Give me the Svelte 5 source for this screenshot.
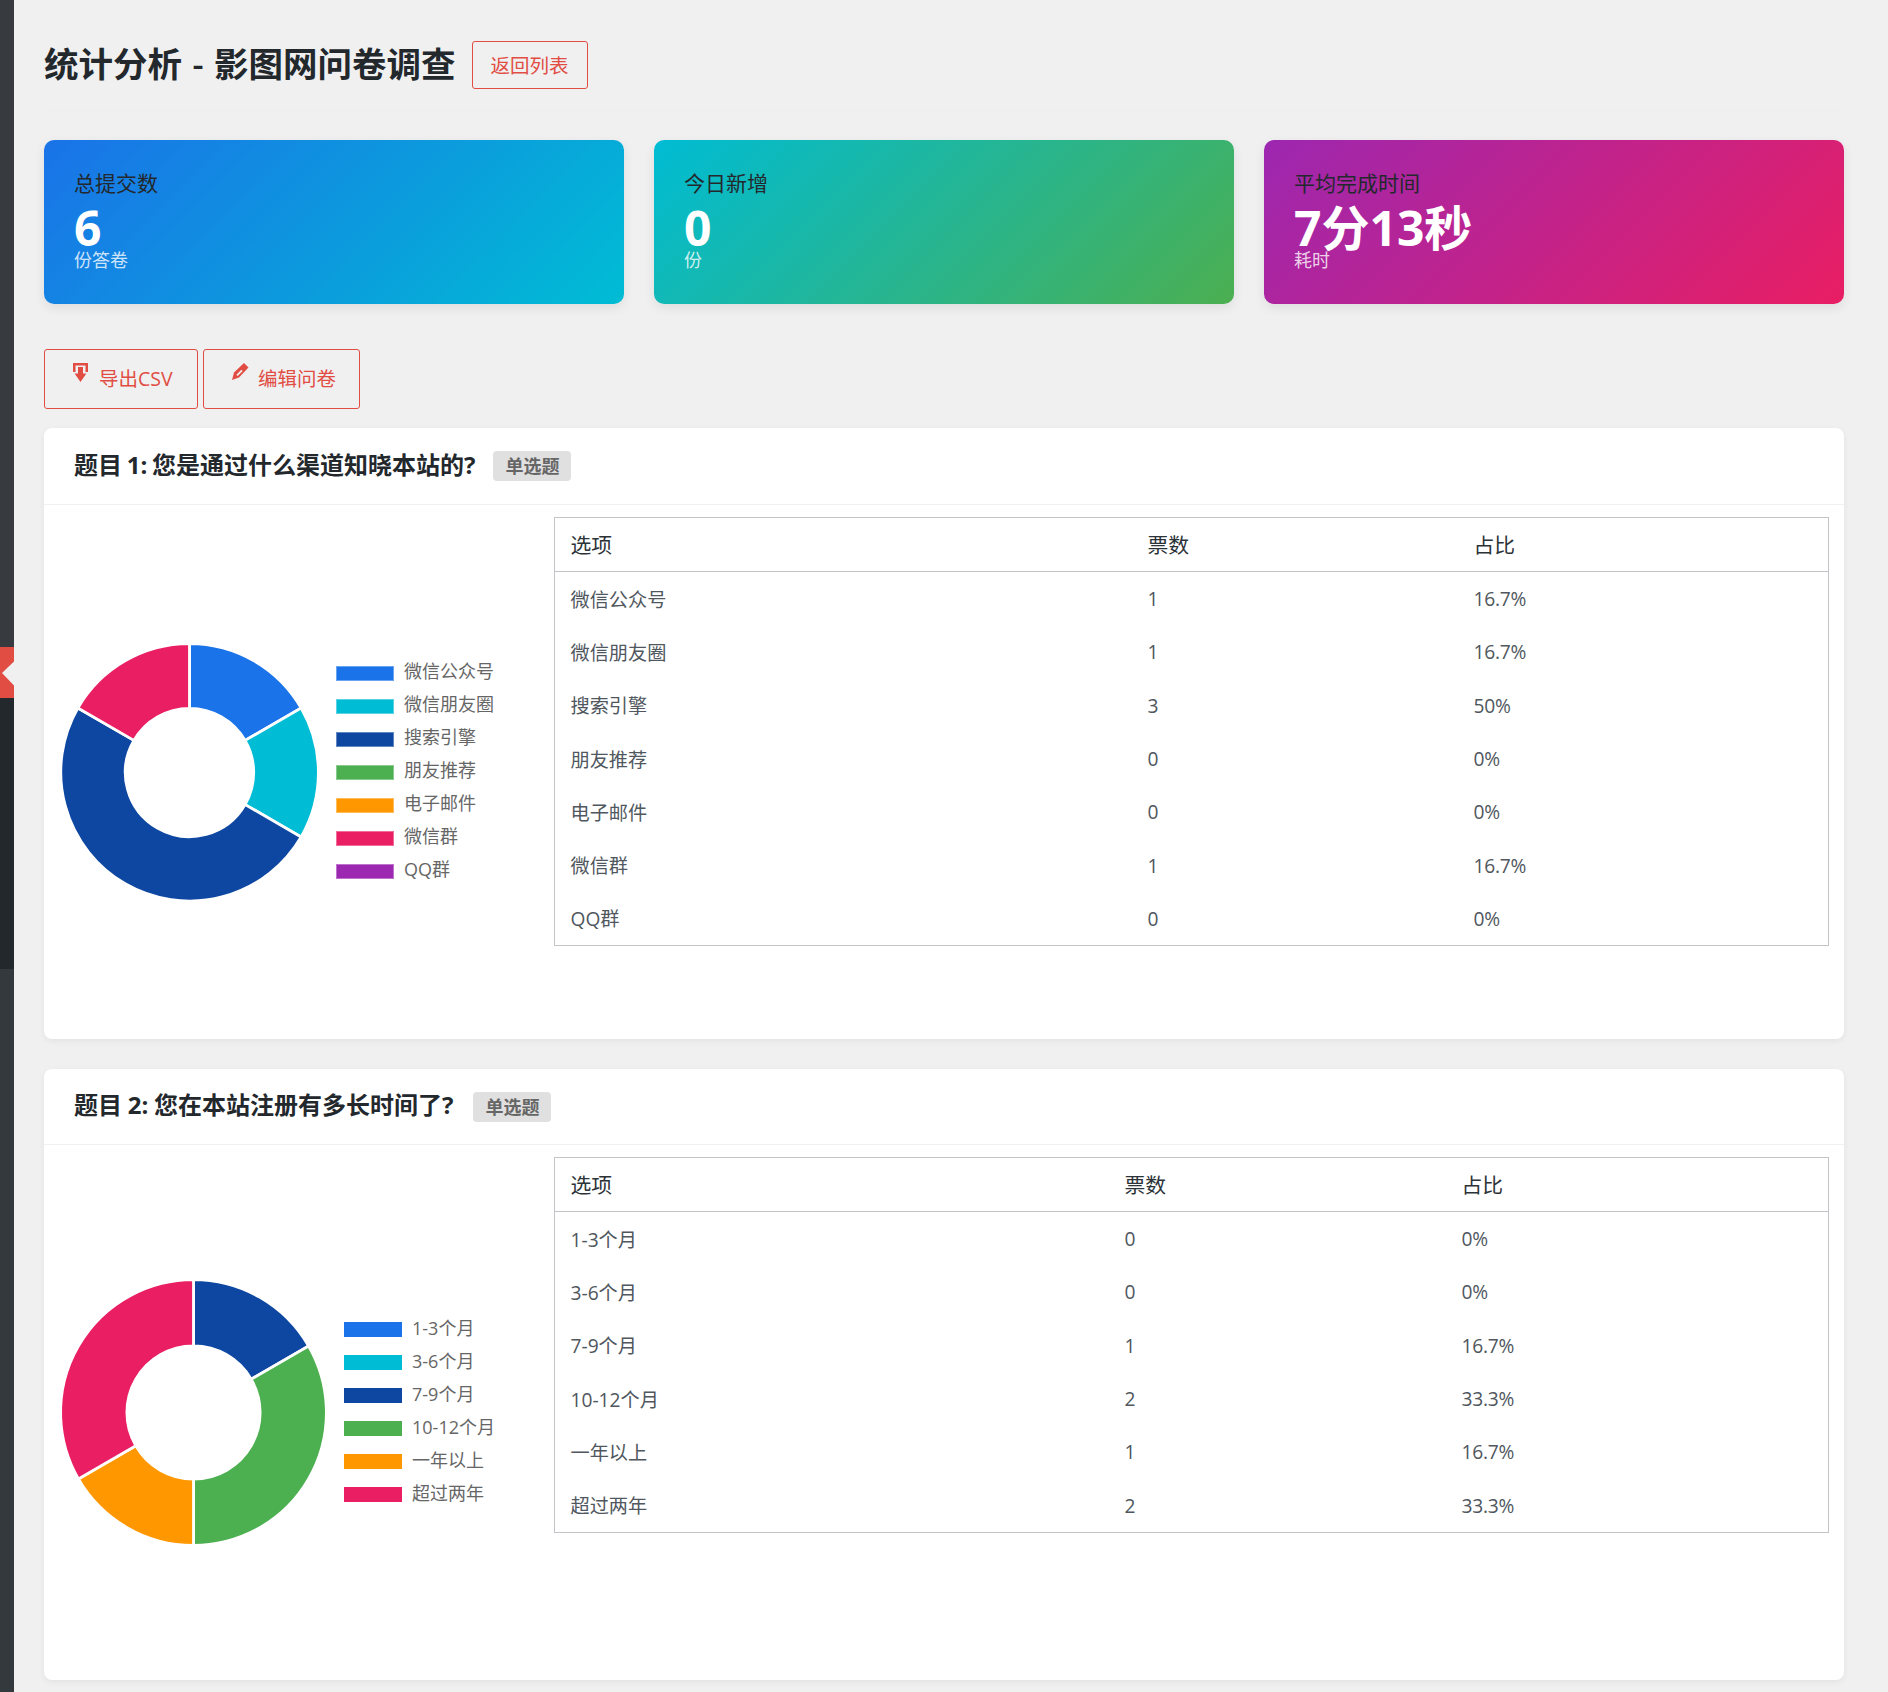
<script>
  const colors = { blue: '#1a73e8', cyan: '#00bcd4', navy: '#0d47a1', green: '#4caf50', orange: '#ff9800', pink: '#e91e63', purple: '#9c27b0' };

  const stats = [
    { cls: 's1', label: '总提交数', value: '6', sub: '份答卷' },
    { cls: 's2', label: '今日新增', value: '0', sub: '份' },
    { cls: 's3', label: '平均完成时间', value: '7分13秒', sub: '耗时' }
  ];

  const questions = [
    {
      cls: 'q1', title: '题目 1: 您是通过什么渠道知晓本站的?', d: 255, r: 64.2,
      rows: [
        ['微信公众号', 1, '16.7%', colors.blue],
        ['微信朋友圈', 1, '16.7%', colors.cyan],
        ['搜索引擎', 3, '50%', colors.navy],
        ['朋友推荐', 0, '0%', colors.green],
        ['电子邮件', 0, '0%', colors.orange],
        ['微信群', 1, '16.7%', colors.pink],
        ['QQ群', 0, '0%', colors.purple]
      ]
    },
    {
      cls: 'q2', title: '题目 2: 您在本站注册有多长时间了?', d: 263, r: 66.6,
      rows: [
        ['1-3个月', 0, '0%', colors.blue],
        ['3-6个月', 0, '0%', colors.cyan],
        ['7-9个月', 1, '16.7%', colors.navy],
        ['10-12个月', 2, '33.3%', colors.green],
        ['一年以上', 1, '16.7%', colors.orange],
        ['超过两年', 2, '33.3%', colors.pink]
      ]
    }
  ];

  function slices(q) {
    const total = q.rows.reduce((a, r) => a + r[1], 0);
    const R = q.d / 2 + 1.4, r = q.r;
    let a = -Math.PI / 2;
    const out = [];
    for (const row of q.rows) {
      if (!row[1]) continue;
      const b = a + (row[1] / total) * Math.PI * 2;
      const large = b - a > Math.PI ? 1 : 0;
      const p = (rad, t) => `${(rad * Math.cos(t)).toFixed(2)} ${(rad * Math.sin(t)).toFixed(2)}`;
      out.push({
        color: row[3],
        d: `M${p(R, a)}A${R} ${R} 0 ${large} 1 ${p(R, b)}L${p(r, b)}A${r} ${r} 0 ${large} 0 ${p(r, a)}Z`
      });
      a = b;
    }
    return out;
  }
</script>

<div class="page">
  <aside class="rail">
    <div class="rail-top"></div>
    <div class="rail-tab">
      <svg width="14" height="51" viewBox="0 0 14 51" aria-hidden="true"><path d="M14 14.5 2 26 14 38.5Z" fill="#f0f0f1" /></svg>
    </div>
    <div class="rail-dark"></div>
    <div class="rail-bottom"></div>
  </aside>

  <main class="wrap">
    <header class="head">
      <h1>统计分析 - 影图网问卷调查</h1>
      <a class="btn back">返回列表</a>
    </header>

    <section class="stats">
      {#each stats as s}
        <div class="stat {s.cls}">
          <div class="stat-label">{s.label}</div>
          <div class="stat-value">{s.value}</div>
          <div class="stat-sub">{s.sub}</div>
        </div>
      {/each}
    </section>

    <div class="actions">
      <a class="btn act first">
        <svg class="ico ico-down" width="15" height="19" viewBox="0 0 15 19" aria-hidden="true">
          <path d="M0 0h15v9h-2.5V2.5h-10V9H0z" fill="#e14d43" />
          <path d="M5 4h5v6.5h3.4L7.5 19 1.6 10.5H5z" fill="#e14d43" />
        </svg>
        导出CSV
      </a>
      <a class="btn act second">
        <svg class="ico ico-pen" width="17" height="17" viewBox="0 0 17 17" aria-hidden="true">
          <path d="M0 17 2 9.5 12 0 16.5 4.5 7 14.5z" fill="#e14d43" />
          <path d="M5 12.3 10 7.3" stroke="#f0f0f1" stroke-width="1.7" />
        </svg>
        编辑问卷
      </a>
    </div>

    {#each questions as q}
      <section class="card {q.cls}">
        <div class="card-head">
          <h3>{q.title}</h3>
          <span class="badge">单选题</span>
        </div>
        <div class="card-body">
          <div class="chart">
            <svg class="donut" width={q.d} height={q.d} viewBox="{-q.d / 2} {-q.d / 2} {q.d} {q.d}" aria-hidden="true">
              {#each slices(q) as s}
                <path d={s.d} fill={s.color} stroke="#fff" stroke-width="2.8" />
              {/each}
            </svg>
            <ul class="legend">
              {#each q.rows as row}
                <li><i style="background:{row[3]}"></i><span>{row[0]}</span></li>
              {/each}
            </ul>
          </div>
          <table>
            <thead>
              <tr><th class="c1">选项</th><th class="c2">票数</th><th>占比</th></tr>
            </thead>
            <tbody>
              {#each q.rows as row}
                <tr><td>{row[0]}</td><td class="num">{row[1]}</td><td class="num">{row[2]}</td></tr>
              {/each}
            </tbody>
          </table>
        </div>
      </section>
    {/each}
  </main>
</div>

<style>
  :global(body) {
    margin: 0;
    background: #f0f0f1;
    color: #23282d;
    font-family: "Open Sans", "Noto Sans CJK SC", sans-serif;
  }
  .page { display: flex; min-height: 1692px; }
  .rail { width: 14px; flex: none; display: flex; flex-direction: column; background: #34393d; }
  .rail-top { height: 647px; background: #373b3f; }
  .rail-tab { height: 51px; background: #e14d43; }
  .rail-tab svg { display: block; }
  .rail-dark { height: 271px; background: #23282d; }
  .rail-bottom { flex: 1; background: #34393d; }

  .wrap { flex: 1; min-width: 0; padding: 41px 44px 12px 30px; }
  .head {
    display: flex; align-items: center; gap: 16px;
    padding-bottom: 21px; margin-bottom: 29px;
    border-bottom: 1px solid #eee;
  }
  h1 { margin: 0 0 2px; font-size: 34.5px; line-height: 46px; font-weight: 600; word-spacing: 1.5px; color: #23282d; }

  .btn {
    display: inline-flex; align-items: center; box-sizing: border-box;
    color: #e14d43; border: 1px solid #e14d43; border-radius: 3px;
    font-size: 19.5px;
  }
  .back { height: 48px; padding: 0 18px 2px; }

  .stats { display: grid; grid-template-columns: repeat(3, 1fr); gap: 30px; margin-bottom: 45px; }
  .stat {
    border-radius: 10px; padding: 30px 30px 32px;
    box-shadow: 0 4px 12px rgba(0, 0, 0, .08);
  }
  .s1 { background: linear-gradient(135deg, #1a73e8, #00bcd4); }
  .s2 { background: linear-gradient(135deg, #00bcd4, #4caf50); }
  .s3 { background: linear-gradient(135deg, #9c27b0, #e91e63); }
  .stat-label { font-size: 21px; line-height: 26px; margin-bottom: 12px; }
  .stat-value { font-size: 48px; line-height: 40px; font-weight: 700; color: #fff; }
  .stat-sub { font-size: 18px; line-height: 24px; color: rgba(255, 255, 255, .8); }

  .actions { display: flex; gap: 5px; margin-bottom: 19px; }
  .act { height: 60px; padding-bottom: 3px; }
  .first { width: 154px; padding-left: 28px; }
  .second { width: 157px; padding-left: 28px; }
  .ico { flex: none; }
  .ico-down { margin: -10px 11px 0 0; }
  .ico-pen { margin: -12px 9px 0 0; }

  .card {
    background: #fff; border-radius: 8px; margin-bottom: 30px;
    box-shadow: 0 2px 6px rgba(0, 0, 0, .06);
  }
  .card:last-child { margin-bottom: 0; }
  .card-head {
    display: flex; align-items: center; gap: 18px;
    height: 77px; box-sizing: border-box; padding: 0 30px;
    border-bottom: 1px solid #f0f0f0;
  }
  .q1 h3 { word-spacing: -1.5px; }
  .q2 h3 { word-spacing: -.5px; }
  .q2 .card-head { gap: 20px; height: 76px; }
  h3 { margin: 0 0 3px; font-size: 24px; line-height: 32px; font-weight: 700; color: #23282d; }
  .badge {
    height: 30px; line-height: 30px; padding: 0 12px; border-radius: 4px;
    background: #e0e0e0; color: #666; font-size: 18px; font-weight: 600;
  }

  .card-body { display: flex; align-items: flex-start; height: 534px; padding: 12px 15px 0 18px; box-sizing: border-box; gap: 0; }
  .q2 .card-body { height: 535px; }
  .chart { flex: none; width: 492px; height: 510px; display: flex; align-items: center; gap: 19px; }
  .donut { flex: none; overflow: visible; }
  .legend { list-style: none; margin: 0; padding: 0; }
  .legend li { display: flex; align-items: center; height: 33px; gap: 10px; font-size: 18px; color: #666; }
  .legend span { padding-bottom: 6px; }
  .legend i { display: block; width: 58px; height: 15px; box-sizing: border-box; }
  .q1 .legend i { border: 1px solid rgba(255, 255, 255, .35); }

  table {
    flex: 1; min-width: 0; border-collapse: separate; border-spacing: 0; table-layout: fixed;
    border: 1px solid #c3c4c7; background: #fff;
  }
  th {
    height: 54px; padding: 0 15.5px 2px; box-sizing: border-box; text-align: left;
    font-size: 20.8px; font-weight: 400; color: #2c3338;
    border-bottom: 1px solid #c3c4c7;
  }
  td { height: 53.3px; padding: 0 15.5px; box-sizing: border-box; font-size: 19.2px; color: #50575e; }
  td.num { letter-spacing: -.25px; }
  .q1 .c1 { width: 577px; }
  .q1 .c2 { width: 326px; }
  .q2 .c1 { width: 554px; }
  .q2 .c2 { width: 337px; }
</style>
